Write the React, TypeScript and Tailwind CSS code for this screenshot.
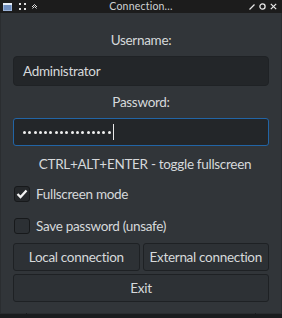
import React from "react";

export default function App() {
  const font = { fontFamily: 'Lato, "Noto Sans", sans-serif' };
  const dots = Array.from({ length: 17 });
  const t = "text-[13.5px] tracking-[-0.3px]";
  return (
    <div className="w-[282px] h-[318px] bg-[#313539] flex flex-col text-[#d6d9db] overflow-hidden" style={font}>
      {/* title bar */}
      <div className="h-[13px] bg-[#1c1c1c] flex items-center px-[3px] relative shrink-0">
        <div className="flex items-center gap-[4px]">
          <svg width="9" height="8" viewBox="0 0 9 8">
            <rect x="0" y="0" width="9" height="8" fill="#9bb3d8" />
            <rect x="0" y="0" width="9" height="2" fill="#e6eef8" />
            <rect x="1" y="2" width="7" height="5" fill="#6f8fc0" />
          </svg>
          <svg width="7" height="7" viewBox="0 0 7 7" className="ml-[3px]">
            <rect x="0" y="0" width="2" height="2" fill="#e0e0e0" />
            <rect x="5" y="0" width="2" height="2" fill="#e0e0e0" />
            <rect x="0" y="5" width="2" height="2" fill="#e0e0e0" />
            <rect x="5" y="5" width="2" height="2" fill="#e0e0e0" />
          </svg>
          <svg width="7" height="7" viewBox="0 0 7 7" className="ml-[1px]">
            <path d="M1 4 L3.5 1.5 L6 4 M1.5 5.5 L3.5 3.5 L5.5 5.5" stroke="#e0e0e0" strokeWidth="1" fill="none" />
          </svg>
        </div>
        <div className="absolute left-0 right-0 top-0 h-[13px] flex items-center justify-center text-[10.5px] leading-none text-[#cfd2d4] tracking-[0.2px]">
          Connection...
        </div>
        <div className="ml-auto flex items-center gap-[4px] pr-[2px]">
          <svg width="6" height="6" viewBox="0 0 6 6">
            <path d="M0.5 5.5 L5.5 0.5" stroke="#e8e8e8" strokeWidth="1.2" />
          </svg>
          <svg width="7" height="7" viewBox="0 0 7 7">
            <circle cx="3.5" cy="3.5" r="2.6" stroke="#e8e8e8" strokeWidth="1.3" fill="none" />
          </svg>
          <svg width="7" height="7" viewBox="0 0 7 7">
            <path d="M0.8 0.8 L6.2 6.2 M6.2 0.8 L0.8 6.2" stroke="#e8e8e8" strokeWidth="1.2" />
          </svg>
        </div>
      </div>

      {/* body */}
      <div className="flex-1 flex flex-col px-[12px] pt-[17px] border-x border-[#2a2d30]">
        <div className={`text-center leading-[20px] ${t}`}>Username:</div>
        <div className={`mt-[6px] h-[30px] rounded-[4px] bg-[#232629] border border-[#1f2225] flex items-center px-[9px] ${t}`}>
          Administrator
        </div>
        <div className={`mt-[6px] text-center leading-[20px] ${t}`}>Password:</div>
        <div className="mt-[6px] h-[28px] rounded-[3px] bg-[#232629] border border-[#2265a6] flex items-center px-[9px]">
          <div className="flex items-center gap-[2.3px]">
            {dots.map((_, i) => (
              <span key={i} className="w-[3px] h-[3px] rounded-full bg-[#f0f0f0]" />
            ))}
          </div>
          <span className="ml-[2px] w-[1px] h-[16px] bg-[#e8e8e8]" />
        </div>
        <div className={`mt-[8px] text-center leading-[20px] pl-[8px] whitespace-nowrap ${t}`}>CTRL+ALT+ENTER - toggle fullscreen</div>
        <div className="mt-[11px] flex items-center h-[18px]">
          <div className="w-[16px] h-[16px] rounded-[3px] border border-[#17191b] bg-[#25282b] flex items-center justify-center ml-[1px]">
            <svg width="12" height="10" viewBox="0 0 12 10">
              <path d="M1.5 5 L4.5 8 L10.5 1.5" stroke="#f2f2f2" strokeWidth="2.3" fill="none" />
            </svg>
          </div>
          <span className={`ml-[6px] ${t}`}>Fullscreen mode</span>
        </div>
        <div className="mt-[14px] flex items-center h-[18px]">
          <div className="w-[16px] h-[16px] rounded-[3px] border border-[#17191b] bg-[#2c3034] ml-[1px]" />
          <span className={`ml-[6px] ${t}`}>Save password (unsafe)</span>
        </div>
        <div className="mt-[8px] flex gap-[3px]">
          <div className={`flex-1 basis-0 h-[28px] rounded-[3px] bg-[#2d3135] border border-[#1e2124] flex items-center justify-center whitespace-nowrap ${t}`}>
            Local connection
          </div>
          <div className={`flex-1 basis-0 h-[28px] rounded-[3px] bg-[#2d3135] border border-[#1e2124] flex items-center justify-center whitespace-nowrap ${t}`}>
            External connection
          </div>
        </div>
        <div className={`mt-[3px] h-[28px] rounded-[3px] bg-[#2d3135] border border-[#1e2124] flex items-center justify-center ${t}`}>
          Exit
        </div>
      </div>
      <div className="h-[5px] bg-[#1a1c1e] flex gap-[1px] shrink-0">
        <div className="w-[26px] border-t border-[#2a2d30]" />
        <div className="flex-1 border-t border-[#2a2d30]" />
        <div className="w-[26px] border-t border-[#2a2d30]" />
      </div>
    </div>
  );
}
